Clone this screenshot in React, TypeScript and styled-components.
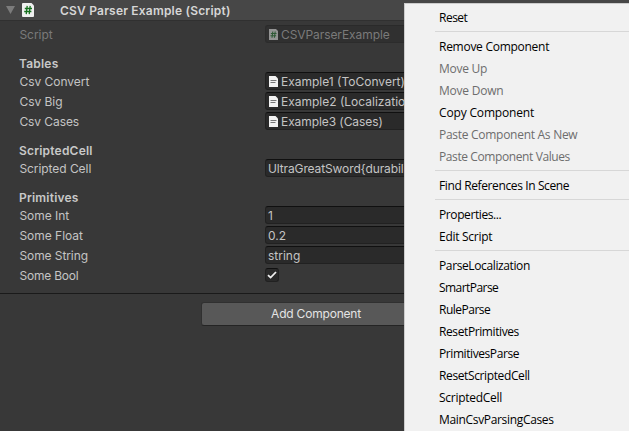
import React from "react";
import styled, { createGlobalStyle } from "styled-components";

const Global = createGlobalStyle`
  * { box-sizing: border-box; }
  html, body { margin: 0; height: 100%; overflow: hidden; background: #383838; }
`;

const Editor = styled.div`
  position: relative;
  width: 629px;
  height: 431px;
  overflow: hidden;
  background: #383838;
  color: #c4c4c4;
  font: 12px/18px Inter, "Liberation Sans", sans-serif;
  white-space: nowrap;
`;

const Header = styled.div`
  display: flex;
  align-items: center;
  height: 21px;
  padding-left: 6px;
  background: #474747;
  border-bottom: 1px solid #303030;
`;

const Title = styled.span`
  margin-left: 26px;
  padding-top: 2px;
  color: #d6d6d6;
  font-weight: 600;
  letter-spacing: 0.2px;
`;

const Foldout = styled.svg`
  display: block;
  margin-right: 7px;
`;

const Body = styled.div`
  display: flex;
  flex-direction: column;
  gap: 2px;
  height: 273px;
  padding: 4px 0 0 19px;
  border-bottom: 1px solid #1a1a1a;
`;

const Heading = styled.div`
  height: 26px;
  padding-top: 10px;
  margin-bottom: -1px;
  color: #c8c8c8;
  font-weight: 600;
  letter-spacing: 0.2px;
`;

const Row = styled.div<{ $disabled?: boolean }>`
  display: flex;
  flex-shrink: 0;
  height: 18px;
  color: ${(p) => (p.$disabled ? "#7a7a7a" : "#c4c4c4")};
`;

const Label = styled.span<{ $spacing?: number }>`
  width: 246px;
  padding: 1px 0 0 0.4px;
  letter-spacing: ${(p) => p.$spacing ?? -0.02}px;
`;

const Field = styled.div<{ $disabled?: boolean; $spacing?: number }>`
  display: flex;
  align-items: center;
  gap: 3px;
  width: 240px;
  height: 18px;
  padding-left: 2px;
  border: 1px solid ${(p) => (p.$disabled ? "#2c2c2c" : "#212121")};
  border-top-color: ${(p) => (p.$disabled ? "#2a2a2a" : "#101010")};
  border-radius: 3px;
  background: ${(p) => (p.$disabled ? "#303030" : "#2a2a2a")};
  letter-spacing: ${(p) => p.$spacing ?? 0}px;

  svg {
    margin-left: 1px;
  }
`;

const FieldText = styled.span`
  padding-top: 1px;
`;

const Checkbox = styled.div`
  display: flex;
  align-items: center;
  justify-content: center;
  width: 14px;
  height: 14px;
  margin-top: 2px;
  border: 1px solid #212121;
  border-top-color: #101010;
  border-radius: 3px;
  background: #2a2a2a;
`;

const AddButton = styled.div`
  display: flex;
  align-items: center;
  justify-content: center;
  width: 230px;
  height: 24px;
  margin: 8px 0 0 201px;
  padding-bottom: 1px;
  border: 1px solid #303030;
  border-bottom-color: #242424;
  border-radius: 3px;
  background: #585858;
  color: #e4e4e4;
  letter-spacing: -0.2px;
`;

/* The context menu floats over the inspector. */
const Menu = styled.div`
  position: absolute;
  top: 3px;
  left: 404px;
  width: 240px;
  height: 440px;
  padding-top: 2px;
  border: 1px solid #ccc;
  background: #f1f1f1;
  font: 12px/22px "Open Sans", "Noto Sans", sans-serif;
`;

const MenuItem = styled.div<{ $disabled?: boolean; $spacing: number }>`
  height: 22px;
  padding: 1px 0 0 34px;
  color: ${(p) => (p.$disabled ? "#6d6d6d" : "#000")};
  letter-spacing: ${(p) => p.$spacing}px;
`;

const Separator = styled.div`
  height: 1px;
  margin: 3px 0 3px 30px;
  background: #d7d7d7;
`;

const ScriptIcon = () => (
  <svg width="12" height="14" viewBox="0 0 12 14">
    <path d="M1 0h8.5L12 2.5V13a1 1 0 0 1-1 1H1a1 1 0 0 1-1-1V1a1 1 0 0 1 1-1z" fill="#f0f0f0" />
    <path d="M5.2 2.8 4.2 11.2M8.2 2.8 7.2 11.2M2.8 5.5h7.2M2.2 8.5h7.2" stroke="#17711f" strokeWidth="1.3" fill="none" />
  </svg>
);

const SmallScriptIcon = () => (
  <svg width="9" height="11" viewBox="0 0 9 11">
    <path d="M0 0h7L9 2v9H0z" fill="#949494" />
    <path d="M3.8 2.5 3 8.7M6.2 2.5 5.4 8.7M1.9 4.5h5.6M1.5 6.7h5.6" stroke="#2f5a36" strokeWidth="1.1" fill="none" />
  </svg>
);

const TextAssetIcon = () => (
  <svg width="9" height="11" viewBox="0 0 9 11">
    <path d="M0 0h6.5L9 2.5V11H0z" fill="#f2f2f2" />
    <path d="M1.5 4.5h6M1.5 6.5h5" stroke="#777" fill="none" />
  </svg>
);

const tables: { label: string; value: string; spacing?: number }[] = [
  { label: "Csv Convert", value: "Example1 (ToConvert)" },
  { label: "Csv Big", value: "Example2 (Localization)" },
  { label: "Csv Cases", value: "Example3 (Cases)", spacing: -0.08 },
];

const primitives: { label: string; value: string; spacing?: number }[] = [
  { label: "Some Int", value: "1" },
  { label: "Some Float", value: "0.2" },
  { label: "Some String", value: "string", spacing: -0.08 },
];

type Entry = { text: string; spacing: number; disabled?: boolean };

const menuGroups: Entry[][] = [
  [{ text: "Reset", spacing: -0.5 }],
  [
    { text: "Remove Component", spacing: -0.27 },
    { text: "Move Up", spacing: -0.25, disabled: true },
    { text: "Move Down", spacing: -0.22, disabled: true },
    { text: "Copy Component", spacing: -0.16 },
    { text: "Paste Component As New", spacing: -0.28, disabled: true },
    { text: "Paste Component Values", spacing: -0.4, disabled: true },
  ],
  [{ text: "Find References In Scene", spacing: -0.38 }],
  [
    { text: "Properties...", spacing: -0.4 },
    { text: "Edit Script", spacing: -0.28 },
  ],
  [
    { text: "ParseLocalization", spacing: -0.38 },
    { text: "SmartParse", spacing: -0.55 },
    { text: "RuleParse", spacing: -0.5 },
    { text: "ResetPrimitives", spacing: -0.4 },
    { text: "PrimitivesParse", spacing: -0.42 },
    { text: "ResetScriptedCell", spacing: -0.38 },
    { text: "ScriptedCell", spacing: -0.27 },
    { text: "MainCsvParsingCases", spacing: -0.33 },
  ],
];

export default function App() {
  return (
    <>
      <Global />
      <Editor>
        <Header>
          <Foldout width="9" height="8" viewBox="0 0 9 8">
            <path d="M0 0h9L4.5 8z" fill="#7c7c7c" />
          </Foldout>
          <ScriptIcon />
          <Title>CSV Parser Example (Script)</Title>
        </Header>
        <Body>
          <Row $disabled>
            <Label>Script</Label>
            <Field $disabled $spacing={-0.08}>
              <SmallScriptIcon />
              <FieldText>CSVParserExample</FieldText>
            </Field>
          </Row>
          <Heading>Tables</Heading>
          {tables.map(({ label, value, spacing }) => (
            <Row key={label}>
              <Label $spacing={spacing}>{label}</Label>
              <Field $spacing={spacing}>
                <TextAssetIcon />
                <FieldText>{value}</FieldText>
              </Field>
            </Row>
          ))}
          <Heading>ScriptedCell</Heading>
          <Row>
            <Label $spacing={-0.06}>Scripted Cell</Label>
            <Field $spacing={-0.12}>
              <FieldText>{"UltraGreatSword{durability"}</FieldText>
            </Field>
          </Row>
          <Heading>Primitives</Heading>
          {primitives.map(({ label, value, spacing }) => (
            <Row key={label}>
              <Label $spacing={spacing}>{label}</Label>
              <Field>
                <FieldText>{value}</FieldText>
              </Field>
            </Row>
          ))}
          <Row>
            <Label $spacing={-0.2}>Some Bool</Label>
            <Checkbox>
              <svg width="10" height="8" viewBox="0 0 10 8">
                <path d="M1 4.2 3.6 6.6 9 1" fill="none" stroke="#f0f0f0" strokeWidth="1.8" />
              </svg>
            </Checkbox>
          </Row>
        </Body>
        <AddButton>Add Component</AddButton>
        <Menu>
          {menuGroups.map((group, i) => (
            <React.Fragment key={i}>
              {i > 0 && <Separator />}
              {group.map((e) => (
                <MenuItem key={e.text} $disabled={e.disabled} $spacing={e.spacing}>
                  {e.text}
                </MenuItem>
              ))}
            </React.Fragment>
          ))}
        </Menu>
      </Editor>
    </>
  );
}
